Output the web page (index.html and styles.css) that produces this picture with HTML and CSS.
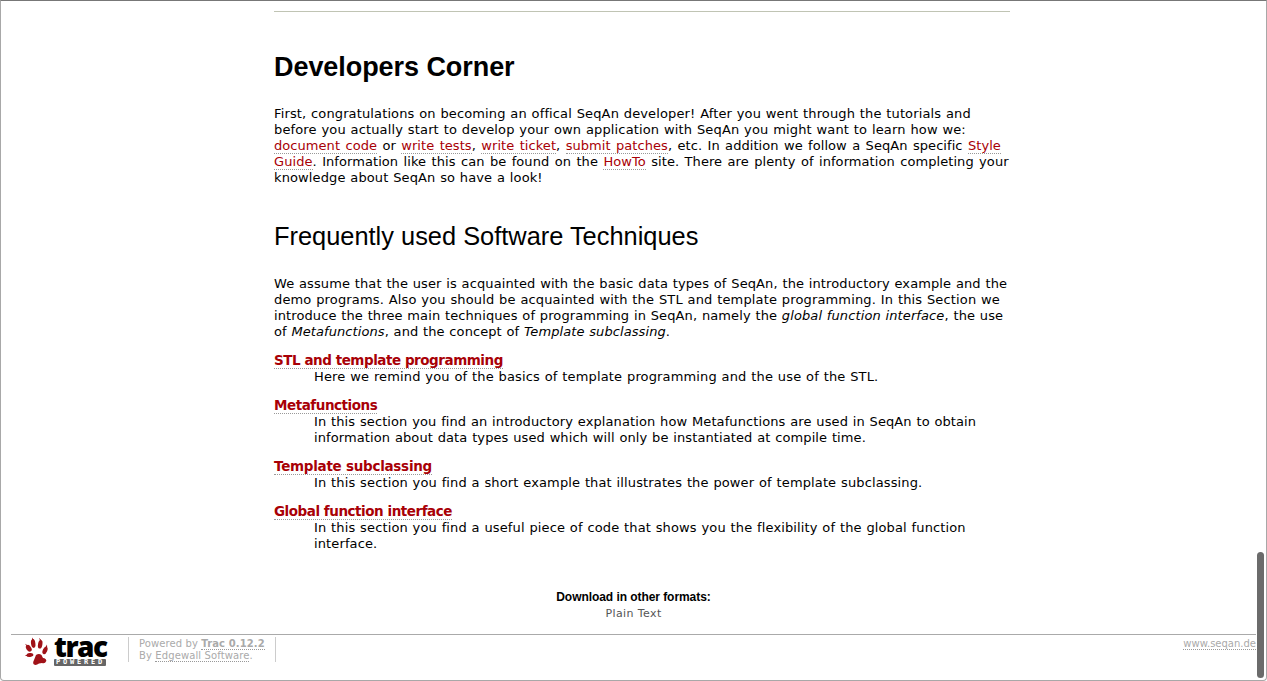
FILE: index.html
```html
<!DOCTYPE html>
<html lang="en">
<head>
<meta charset="utf-8">
<title>SeqAn – Developers Corner</title>
<link rel="stylesheet" href="styles.css">
</head>
<body>
<div class="window">
<main class="content">
<hr class="rule">
<h1 class="title"><span>Developers Corner</span></h1>
<p class="text">
<span class="line l1">First, congratulations on becoming an offical SeqAn developer! After you went through the tutorials and</span>
<span class="line l2">before you actually start to develop your own application with SeqAn you might want to learn how we:</span>
<span class="line l3"><a class="link">document code</a> or <a class="link">write tests</a>, <a class="link">write ticket</a>, <a class="link">submit patches</a>, etc. In addition we follow a SeqAn specific <a class="link">Style</a></span>
<span class="line l4"><a class="link">Guide</a>. Information like this can be found on the <a class="link">HowTo</a> site. There are plenty of information completing your</span>
<span class="line l5">knowledge about SeqAn so have a look!</span>
</p>
<h2 class="subtitle"><span>Frequently used Software Techniques</span></h2>
<p class="text">
<span class="line l6">We assume that the user is acquainted with the basic data types of SeqAn, the introductory example and the</span>
<span class="line l7">demo programs. Also you should be acquainted with the STL and template programming. In this Section we</span>
<span class="line l8">introduce the three main techniques of programming in SeqAn, namely the <em>global function interface</em>, the use</span>
<span class="line l9">of <em>Metafunctions</em>, and the concept of <em>Template subclassing</em>.</span>
</p>
<dl class="topics">
<dt><a class="link t1">STL and template programming</a></dt>
<dd class="text"><span class="line l10">Here we remind you of the basics of template programming and the use of the STL.</span></dd>
<dt><a class="link t2">Metafunctions</a></dt>
<dd class="text"><span class="line l11">In this section you find an introductory explanation how Metafunctions are used in SeqAn to obtain</span>
<span class="line l12">information about data types used which will only be instantiated at compile time.</span></dd>
<dt><a class="link t3">Template subclassing</a></dt>
<dd class="text"><span class="line l13">In this section you find a short example that illustrates the power of template subclassing.</span></dd>
<dt><a class="link t4">Global function interface</a></dt>
<dd class="text"><span class="line l14">In this section you find a useful piece of code that shows you the flexibility of the global function</span>
<span class="line l15">interface.</span></dd>
</dl>
</main>
<div class="formats"><h3 class="formats-title">Download in other formats:</h3><a class="plain">Plain Text</a></div>
<footer class="footer">
<div class="logo">
<svg class="paw" viewBox="0 0 24 28" width="24" height="28">
<g fill="#a01218">
<path d="M12 18Q15 16 17.500 18L19 21Q22.500 21.500 22.300 24Q21 27 18 26L15 26.500Q12 28.800 10 27.500Q8.300 26 10 23Z"/>
<ellipse cx="9.200" cy="6.500" rx="2.200" ry="4.400" transform="rotate(-8 9.200 6.500)"/>
<ellipse cx="16.200" cy="7.300" rx="2.200" ry="4.300" transform="rotate(10 16.200 7.300)"/>
<ellipse cx="4.800" cy="11.300" rx="2.400" ry="3.700" transform="rotate(-35 4.800 11.300)"/>
<ellipse cx="21" cy="13.500" rx="2.200" ry="3.800" transform="rotate(25 21 13.500)"/>
<ellipse cx="6" cy="18" rx="3.400" ry="2" transform="rotate(-8 6 18)"/>
<path d="M8 3L8.300 .5L9.800 3ZM16 3.500L15 .8L17.500 3.300ZM21.500 10L23 7.500L23.200 11ZM2.500 9L1 6.800L4 8.500ZM3.500 17.500L.8 18.800L3.500 19.300Z"/>
</g>
</svg>
<div class="brand"><span class="word">trac</span><span class="powered">POWERED</span></div>
</div>
<p class="credits"><span class="c1">Powered by <a class="glink"><b>Trac 0.12.2</b></a></span><span class="c2">By <a class="glink">Edgewall Software</a>.</span></p>
<p class="site"><a class="glink">www.seqan.de</a></p>
</footer>
<div class="scrollbar"></div>
</div>
</body>
</html>
```
FILE: styles.css
```css
* { box-sizing: border-box; }
body { margin: 0; background: #fff; color: #000; font-family: "DejaVu Sans", sans-serif; }
.window { position: relative; width: 1267px; height: 681px; border: 1px solid #a8a8a8; border-top-color: #777; border-radius: 0 0 4px 4px; overflow: hidden; }
.content { width: 736px; margin-left: 273px; padding-top: 10px; height: 588px; }
.rule { margin: 0; border: 0; border-top: 1px solid #c0c4b4; height: 1px; }
.title, .subtitle { margin: 0; font-family: "Liberation Sans", Arial, sans-serif; line-height: 30px; white-space: nowrap; }
.title { margin-top: 40px; font-size: 27px; letter-spacing: -.06px; }
.subtitle { margin-top: 35px; font-size: 25.4px; font-weight: normal; }
.text { margin: 0; font-size: 13px; line-height: 16px; }
.title + .text { margin-top: 24px; }
.subtitle + .text { margin-top: 25px; }
.line { display: block; white-space: nowrap; word-spacing: .5px; letter-spacing: .12px; }
.l1, .l13, .l14 { letter-spacing: .13px; }
.l2, .l7, .l10 { letter-spacing: .145px; }
.l3 { word-spacing: 1.2px; letter-spacing: .06px; }
.l4 { word-spacing: 1.2px; letter-spacing: .07px; }
.l6, .l8, .l11, .l12 { letter-spacing: .105px; }
.l9 { letter-spacing: .085px; }
.link { color: #a80006; text-decoration: none; border-bottom: 1px dotted #999; }
.topics { margin: 12px 0 0; }
.topics dt { font-weight: bold; font-size: 13.5px; line-height: 17px; height: 17px; white-space: nowrap; letter-spacing: -.46px; }
.topics dt .t3 { letter-spacing: -.27px; }
.topics dd { margin: 0 0 12px 40px; }
.formats { height: 45px; text-align: center; }
.formats-title { margin: 0; font: bold 12px/16px "Liberation Sans", Arial, sans-serif; letter-spacing: -.06px; }
.plain { display: block; font-size: 11px; line-height: 17px; color: #555; letter-spacing: .4px; }
.footer { display: flex; margin: 0 10px; border-top: 1px solid #aaa; padding-top: 3px; color: #aaa; font-size: 10px; line-height: 12px; }
.logo { display: flex; width: 117px; padding-left: 13px; height: 30px; margin-top: -1px; }
.brand { margin-left: 6px; width: 54px; color: #000; }
.word { display: block; height: 22px; font: 800 28px/19px "Open Sans", sans-serif; letter-spacing: -1.5px; }
.powered { display: block; width: 52px; height: 7px; border-radius: 1px; background: #666; color: #fff; font: bold 7px/7px "DejaVu Sans Mono", monospace; letter-spacing: 2.8px; padding-left: 2px; }
.credits { margin: -1px 0 0; height: 25px; width: 148px; border: solid #ccc; border-width: 0 1px; padding: 1px 0 0 10px; white-space: nowrap; letter-spacing: .11px; }
.credits > span { display: block; }
.glink { border-bottom: 1px dotted #999; }
.site { margin: 0 0 0 auto; }
.scrollbar { position: absolute; left: 1256px; top: 551px; width: 7px; height: 126px; border-radius: 4px; background: #6b6b6b; }
```
